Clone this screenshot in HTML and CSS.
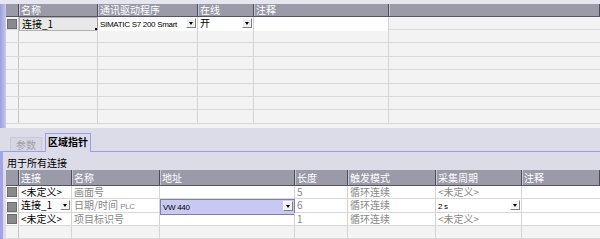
FILE: index.html
```html
<!DOCTYPE html>
<html>
<head>
<meta charset="utf-8">
<link rel="stylesheet" href="styles.css">
</head>
<body>
<div class="screen">
  <div class="top">
    <div class="strip"></div>
    <div class="tgrid">
      <div class="trow hdr">
        <div class="c"></div>
        <div class="c">名称</div>
        <div class="c">通讯驱动程序</div>
        <div class="c">在线</div>
        <div class="c">注释</div>
        <div class="c"></div>
      </div>
      <div class="trow first">
        <div class="c rh"><span class="sq"></span></div>
        <div class="c edit">连接_1</div>
        <div class="c w drop"><span class="lat">SIMATIC S7 200 Smart</span><span class="arr"></span></div>
        <div class="c w drop">开<span class="arr"></span></div>
        <div class="c w"></div>
        <div class="c"></div>
      </div>
      <div class="trow"><div class="c"></div><div class="c"></div><div class="c"></div><div class="c"></div><div class="c"></div><div class="c"></div></div>
      <div class="trow"><div class="c"></div><div class="c"></div><div class="c"></div><div class="c"></div><div class="c"></div><div class="c"></div></div>
      <div class="trow"><div class="c"></div><div class="c"></div><div class="c"></div><div class="c"></div><div class="c"></div><div class="c"></div></div>
      <div class="trow"><div class="c"></div><div class="c"></div><div class="c"></div><div class="c"></div><div class="c"></div><div class="c"></div></div>
      <div class="trow"><div class="c"></div><div class="c"></div><div class="c"></div><div class="c"></div><div class="c"></div><div class="c"></div></div>
      <div class="trow"><div class="c"></div><div class="c"></div><div class="c"></div><div class="c"></div><div class="c"></div><div class="c"></div></div>
      <div class="trow"><div class="c"></div><div class="c"></div><div class="c"></div><div class="c"></div><div class="c"></div><div class="c"></div></div>
    </div>
  </div>
  <div class="bottom">
    <div class="tabs">
      <div class="tab">参数</div>
      <div class="tab active">区域指针</div>
    </div>
    <div class="panel">
      <div class="label">用于所有连接</div>
      <div class="bgrid">
        <div class="brow hdr">
          <div class="c"></div>
          <div class="c">连接</div>
          <div class="c">名称</div>
          <div class="c">地址</div>
          <div class="c">长度</div>
          <div class="c">触发模式</div>
          <div class="c">采集周期</div>
          <div class="c">注释</div>
        </div>
        <div class="brow">
          <div class="c rh"><span class="sq"></span></div>
          <div class="c">&lt;未定义&gt;</div>
          <div class="c dim">画面号</div>
          <div class="c"></div>
          <div class="c dim">5</div>
          <div class="c dim">循环连续</div>
          <div class="c dim">&lt;未定义&gt;</div>
          <div class="c"></div>
        </div>
        <div class="brow">
          <div class="c rh"><span class="sq"></span></div>
          <div class="c drop">连接_1<span class="arr"></span></div>
          <div class="c dim">日期/时间 <span class="lat">PLC</span></div>
          <div class="c sel drop"><span class="lat">VW 440</span><span class="arr"></span></div>
          <div class="c dim">6</div>
          <div class="c dim">循环连续</div>
          <div class="c drop"><span class="lat">2 s</span><span class="arr"></span></div>
          <div class="c"></div>
        </div>
        <div class="brow">
          <div class="c rh"><span class="sq"></span></div>
          <div class="c">&lt;未定义&gt;</div>
          <div class="c dim">项目标识号</div>
          <div class="c"></div>
          <div class="c dim">1</div>
          <div class="c dim">循环连续</div>
          <div class="c dim">&lt;未定义&gt;</div>
          <div class="c"></div>
        </div>
        <div class="brow empty">
          <div class="c"></div><div class="c"></div><div class="c"></div><div class="c"></div><div class="c"></div><div class="c"></div><div class="c"></div><div class="c"></div>
        </div>
      </div>
    </div>
  </div>
</div>
</body>
</html>
```
FILE: styles.css
```css
html, body {
  margin: 0;
  padding: 0;
}
body {
  width: 600px;
  height: 239px;
  overflow: hidden;
  background: #dcdce9;
  font-family: "Noto Sans CJK SC", "Liberation Sans", sans-serif;
  font-size: 10px;
  color: #000;
}
.screen {
  width: 600px;
  height: 239px;
  display: flex;
  flex-direction: column;
}
.top {
  height: 128px;
  display: flex;
  background: #e6e6f0;
  padding-top: 4px;
  box-sizing: border-box;
  overflow: hidden;
}
.strip {
  width: 6px;
  flex: none;
  background: linear-gradient(to right, #9d9ddc, #c8c8ee);
}
.tgrid {
  flex: 1;
  display: flex;
  flex-direction: column;
  background: #f3f3f3;
}
.trow, .brow {
  display: grid;
  height: 13.4px;
  box-sizing: border-box;
  border-bottom: 1px solid #d8d8d8;
}
.trow {
  grid-template-columns: 13px 79px 100px 56px 135px 1fr;
}
.brow {
  grid-template-columns: 13px 53px 88px 135px 53px 88px 86px 1fr;
}
.c {
  position: relative;
  box-sizing: border-box;
  border-right: 1px solid #d4d4d4;
  line-height: 12px;
  padding-left: 2px;
  white-space: nowrap;
}
.c:last-child {
  border-right: none;
}
.trow .c:first-child, .brow .c:first-child {
  border-right: 1px solid #c6c6c6;
}
.hdr {
  height: 13px;
  background: #9b9aa9;
  border-bottom: 1px solid #55545f;
  color: #fff;
}
.hdr .c {
  border-right: 1px solid #4e4d58;
  box-shadow: inset 1px 0 0 #c6c5d0;
  line-height: 11px;
  font-size: 10px;
}
.hdr .c:first-child {
  box-shadow: none;
  border-right: 1px solid #4e4d58;
}
.first {
  height: 13px;
}
.w {
  background: #fff;
}
.edit {
  background: #e8e8e8;
  border: 1px solid #b0b0b0;
  border-right: 1px solid #a0a0a0;
}
.edit::after {
  content: "";
  position: absolute;
  right: 0;
  bottom: 0;
  width: 2px;
  height: 2px;
  background: #000;
}
.rh {
  display: flex;
  align-items: center;
  justify-content: center;
  padding: 0;
}
.sq {
  width: 8px;
  height: 8px;
  background: #8a8a8a;
  border: 1px solid #6c6c6c;
}
.lat {
  font-family: "Liberation Sans", sans-serif;
  font-size: 8px;
  letter-spacing: -0.3px;
}
.arr {
  position: absolute;
  right: 1px;
  top: 1px;
  width: 10px;
  height: 10px;
  background: #f0f0f0;
  border-left: 1px solid #fff;
  border-top: 1px solid #fff;
  border-right: 1px solid #808080;
  border-bottom: 1px solid #808080;
  box-sizing: border-box;
}
.arr::after {
  content: "";
  position: absolute;
  left: 2px;
  top: 3px;
  border-left: 2.5px solid transparent;
  border-right: 2.5px solid transparent;
  border-top: 3px solid #000;
}
.bottom {
  flex: 1;
  display: flex;
  flex-direction: column;
  background: #dcdce9;
}
.tabs {
  display: flex;
  align-items: flex-end;
  height: 23px;
  padding-left: 10px;
  gap: 3px;
  box-sizing: border-box;
}
.tab {
  height: 14px;
  line-height: 13px;
  padding: 0 5px;
  color: #a0a0a8;
  background: #d6d6e4;
  border: 1px solid #c8c8dc;
  border-bottom: none;
  box-sizing: border-box;
}
.tab.active {
  height: 19px;
  margin-bottom: -1px;
  position: relative;
  color: #000;
  font-weight: bold;
  background: #dcdce9;
  border: 1px solid #9c9ce0;
  border-bottom: none;
  line-height: 16px;
  padding: 0 2px;
}
.panel {
  flex: 1;
  border-top: 1px solid #9c9ce0;
  border-left: 3px solid #a4a4e2;
  display: flex;
  flex-direction: column;
}
.label {
  height: 18px;
  line-height: 22px;
  padding-left: 4px;
  font-size: 10px;
}
.bgrid {
  margin-left: 3px;
  display: flex;
  flex-direction: column;
  background: #fff;
}
.brow.hdr {
  height: 16px;
}
.brow.hdr .c {
  line-height: 15px;
}
.brow .c {
  line-height: 12px;
}
.dim {
  color: #888;
}
.sel {
  background: #c8c8f2;
  border: 1px solid #8080a0;
}
.brow .drop .arr {
  background: #f4f4f4;
}
.empty {
  background: #f3f3f3;
  height: 13px;
}
```
